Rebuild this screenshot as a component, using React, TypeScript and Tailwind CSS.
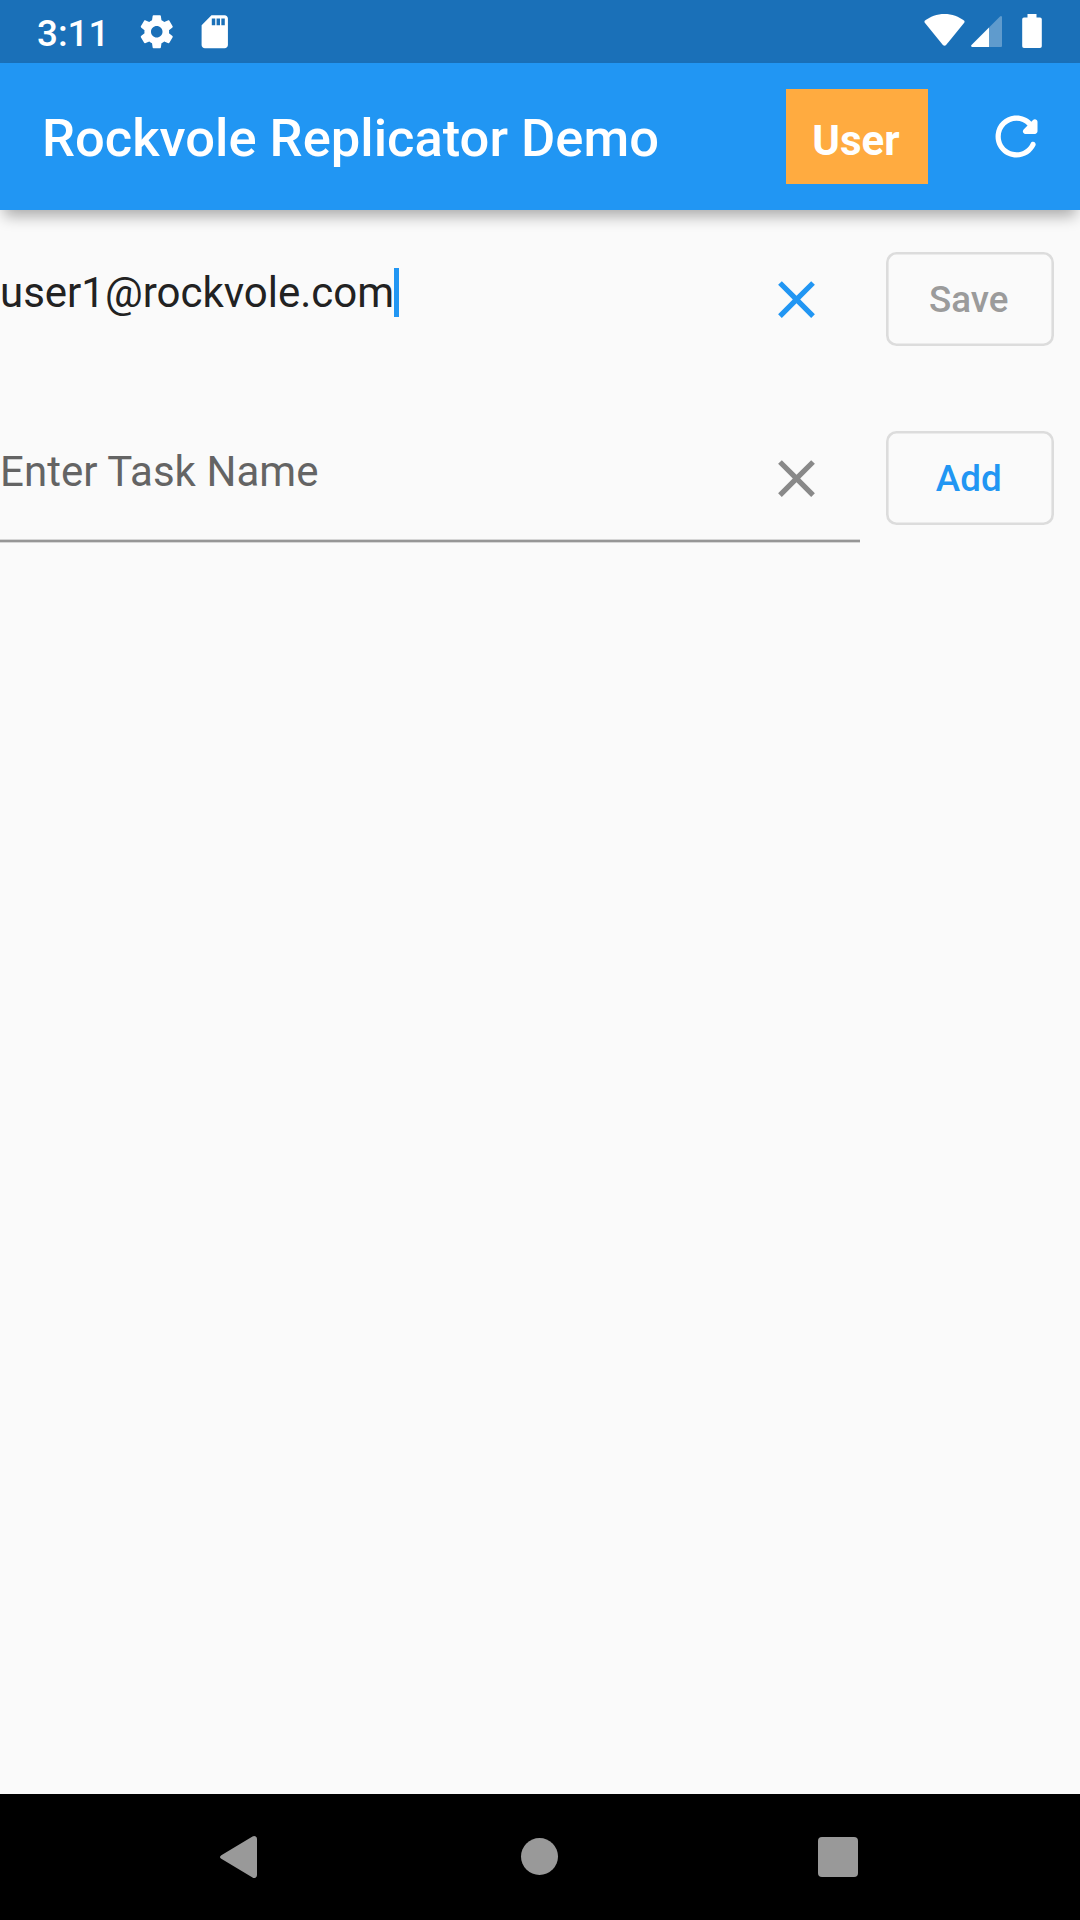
import React from "react";

function StatusBar() {
  return (
    <div className="flex h-[63px] items-start justify-between bg-[#1a70b8] pl-[37px] pr-[38.5px] text-white">
      <div className="flex items-start">
        <span className="mt-3 w-[99.5px] text-[36.75px] font-medium leading-[43px]">3:11</span>
        <svg className="mt-[11.5px] size-[39.5px]" viewBox="0 0 24 24" fill="currentColor">
          <path d="M19.43 12.98c.04-.32.07-.64.07-.98s-.03-.66-.07-.98l2.11-1.65c.19-.15.24-.42.12-.64l-2-3.46c-.12-.22-.39-.3-.61-.22l-2.49 1c-.52-.4-1.08-.73-1.69-.98l-.38-2.65C14.46 2.18 14.25 2 14 2h-4c-.25 0-.46.18-.49.42l-.38 2.65c-.61.25-1.17.59-1.69.98l-2.49-1c-.23-.09-.49 0-.61.22l-2 3.46c-.13.22-.07.49.12.64l2.11 1.65c-.04.32-.07.65-.07.98s.03.66.07.98l-2.11 1.65c-.19.15-.24.42-.12.64l2 3.46c.12.22.39.3.61.22l2.49-1c.52.4 1.08.73 1.69.98l.38 2.65c.03.24.24.42.49.42h4c.25 0 .46-.18.49-.42l.38-2.65c.61-.25 1.17-.59 1.69-.98l2.49 1c.23.09.49 0 .61-.22l2-3.46c.12-.22.07-.49-.12-.64l-2.11-1.65zM12 15.5c-1.93 0-3.5-1.57-3.5-3.5s1.57-3.5 3.5-3.5 3.5 1.57 3.5 3.5-1.57 3.5-3.5 3.5z" />
        </svg>
        <svg className="ml-[18.5px] mt-[11.5px] size-[39.5px]" viewBox="0 0 24 24" fill="currentColor">
          <path d="M18 2h-8L4.02 8 4 20c0 1.1.9 2 2 2h12c1.1 0 2-.9 2-2V4c0-1.1-.9-2-2-2zm-5.700 6h-2.100V4h2.100v4zm2.900 0h-2.100V4h2.100v4zm2.900 0h-2.100V4h2.100v4z" />
        </svg>
      </div>
      <div className="flex items-start">
        <svg className="mt-3.5 h-8 w-[41px]" viewBox="0 0 41 32" fill="currentColor">
          <path d="M20.5 0C13 0 6 2.6 1 6.6Q0 7.5 .8 8.8L18.9 31Q20.5 32.6 22.1 31L40.2 8.8Q41 7.5 40 6.6C35 2.6 28 0 20.5 0Z" />
        </svg>
        <svg className="ml-1.5 mt-4 h-[31px] w-[31px]" viewBox="0 0 31 31" fill="currentColor">
          <path opacity=".3" d="M18 11.5V31H30Q31 31 31 30V1Q30.5-.5 29 .5Z" />
          <path d="M18 11.5V31H1Q-.5 30.5.5 29Z" />
        </svg>
        <svg className="ml-[19.5px] mt-3.5 h-[34px] w-5" viewBox="0 0 20 34" fill="currentColor">
          <path d="M5.5 0h9v3.5h3.500q1.800 0 1.800 1.800v27q0 1.700-1.800 1.700H2q-1.800 0-1.800-1.700v-27q0-1.800 1.800-1.800h3.500z" />
        </svg>
      </div>
    </div>
  );
}

function AppBar() {
  return (
    <header className="relative flex h-[147px] items-center bg-[#2196f3] pl-[42px] pr-[31.75px] text-white shadow-[0_10px_14px_-4px_rgba(0,0,0,0.32)]">
      <h1 className="flex-1 whitespace-nowrap pt-[3px] text-[52.5px] font-medium leading-[62px]">Rockvole Replicator Demo</h1>
      <div className="flex h-[95px] w-[142px] items-center justify-center bg-[#ffab40] pr-[2px] pt-[7px] text-[42px] font-bold leading-[49px]">User</div>
      <button className="ml-[57.25px] size-[63px]" aria-label="Refresh">
        <svg className="size-[63px]" viewBox="0 0 24 24" fill="currentColor">
          <path d="M17.65 6.35c-1.63-1.63-3.94-2.57-6.48-2.31-3.67.37-6.69 3.35-7.1 7.02C3.52 15.91 7.27 20 12 20c3.19 0 5.93-1.87 7.21-4.56.32-.67-.16-1.44-.9-1.44-.37 0-.72.2-.88.53-1.13 2.43-3.84 3.97-6.8 3.31-2.22-.49-4.01-2.3-4.48-4.52C5.31 9.44 8.26 6 12 6c1.66 0 3.14.69 4.22 1.78l-1.51 1.51c-.63.63-.19 1.71.7 1.71H19c.55 0 1-.45 1-1V6.41c0-.89-1.08-1.34-1.71-.71l-.64.65z" />
        </svg>
      </button>
    </header>
  );
}

function CloseIcon() {
  return (
    <svg className="size-[63px]" viewBox="0 0 24 24" fill="currentColor">
      <path d="M19 6.41L17.59 5 12 10.59 6.41 5 5 6.41 10.59 12 5 17.59 6.41 19 12 13.41 17.59 19 19 17.59 13.41 12z" />
    </svg>
  );
}

function OutlineButton({ label, className }: { label: string; className: string }) {
  return (
    <button
      className={`ml-[26px] flex w-[168.5px] items-center justify-center rounded-[10.5px] pr-[2px] text-[36.75px] font-medium leading-[43px] shadow-[inset_0_0_0_2.6px_#dcdcdc] ${className}`}
    >
      {label}
    </button>
  );
}

export default function App() {
  return (
    <div className="flex h-[1920px] w-[1080px] flex-col overflow-hidden bg-[#fafafa] font-['Roboto',sans-serif]">
      <StatusBar />
      <AppBar />
      <main className="flex-1">
        <div className="flex h-[178.5px] items-center">
          <div className="flex h-[126px] w-[859.5px] items-center pr-[31.5px]">
            <div className="mb-3 flex flex-1 items-center text-[42px] leading-[49px] text-[#222222]">
              <span className="pb-[2px]">user1@rockvole.com</span>
              <span className="mb-[2px] h-[49px] w-[5.25px] bg-[#2196f3]" />
            </div>
            <span className="text-[#2196f3]"><CloseIcon /></span>
          </div>
          <OutlineButton label="Save" className="h-[94px] text-[#9b9b9b]" />
        </div>
        <div className="flex h-[178.5px] items-center">
          <div className="flex h-[130.5px] w-[859.5px] flex-col">
            <div className="flex flex-1 items-center pr-[31.5px] pt-[5px]">
              <div className="mb-3.5 flex-1 text-[42px] leading-[49px] tracking-[0.05px] text-[#646464]">Enter Task Name</div>
              <span className="text-[#898989]"><CloseIcon /></span>
            </div>
            <div className="h-1 border-y border-[#d6d6d6] bg-[#969696]" />
          </div>
          <OutlineButton label="Add" className="h-[94.5px] pt-[1.5px] text-[#2196f3]" />
        </div>
      </main>
      <nav className="flex h-[126px] items-start bg-black pl-[220px] text-[#999999]">
        <svg className="mt-[42px] h-[42px] w-[37px]" viewBox="0 0 37 42" fill="currentColor">
          <path d="M1.3 19.2L32.5.6Q34.2-.4 35.8.6Q37 1.3 37 3V39Q37 40.7 35.8 41.4Q34.2 42.4 32.5 41.4L1.3 22.8Q-1.3 21 1.3 19.2Z" />
        </svg>
        <span className="ml-[264px] mt-11 size-[37px] rounded-full bg-[#999999]" />
        <span className="ml-[260px] mt-[43px] size-10 rounded-[4px] bg-[#999999]" />
      </nav>
    </div>
  );
}
